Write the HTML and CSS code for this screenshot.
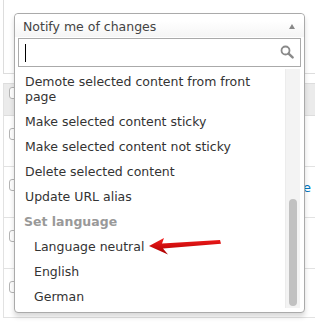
FILE: index.html
```html
<!DOCTYPE html>
<html lang="en">
<head>
  <meta charset="UTF-8" />
  <title>Bulk operations</title>
  <link rel="stylesheet" href="styles.css">
</head>
<body>
  <div class="page">
    <div class="panel"></div>

    <div class="content-table">
      <div class="row row-head"><span class="check"></span></div>
      <div class="row"><span class="check"></span></div>
      <div class="row"><span class="check"></span><a class="title" href="#">Article</a></div>
      <div class="row"><span class="check"></span></div>
      <div class="row row-last"><span class="check"></span></div>
    </div>

    <div class="chosen">
      <div class="chosen-single">
        <span>Notify me of changes</span>
        <b class="caret"></b>
      </div>
      <div class="chosen-search">
        <div class="search-input">
          <span class="text-cursor"></span>
          <svg class="search-icon" width="14" height="14" viewBox="0 0 14 14">
            <circle cx="5.5" cy="5.5" r="4" fill="none" stroke="#8a8a8a" stroke-width="1.8"/>
            <line x1="8.6" y1="8.6" x2="12.6" y2="12.4" stroke="#8a8a8a" stroke-width="2.4" stroke-linecap="round"/>
          </svg>
        </div>
      </div>
      <div class="chosen-results">
        <ul class="options">
          <li>Demote selected content from front page</li>
          <li>Make selected content sticky</li>
          <li>Make selected content not sticky</li>
          <li>Delete selected content</li>
          <li>Update URL alias</li>
          <li class="group">Set language</li>
          <li class="group-option">Language neutral</li>
          <li class="group-option">English</li>
          <li class="group-option">German</li>
        </ul>
        <div class="scrollbar"><div class="thumb"></div></div>
      </div>
    </div>

    <svg class="pointer" width="80" height="22" viewBox="0 0 80 22">
      <defs>
        <linearGradient id="red" x1="0" y1="0" x2="0" y2="1">
          <stop offset="0" stop-color="#f51c1c"/>
          <stop offset="1" stop-color="#a80000"/>
        </linearGradient>
      </defs>
      <polygon points="2,11 17,3 15,8.5 73,5 74,8.8 16,13.5 21,19.5" fill="url(#red)"/>
    </svg>
  </div>
</body>
</html>
```

FILE: styles.css
```css
body {
  margin: 0;
  background: #fff;
  font-family: "DejaVu Sans", sans-serif;
}

.page {
  position: relative;
  width: 315px;
  height: 327px;
  overflow: hidden;
}

.panel {
  margin-left: 3px;
  height: 73px;
  border-left: 1px solid #ddd;
  border-bottom: 1px solid #ddd;
}

.content-table {
  margin: 9px 0 0 3px;
  border-left: 1px solid #e2e2e2;
  border-top: 1px solid #ddd;
}

.row {
  display: flex;
  align-items: flex-start;
  justify-content: space-between;
  height: 51px;
  padding: 12px 4px 0 5px;
  box-sizing: border-box;
  border-bottom: 1px solid #e2e2e2;
}

.row-head {
  height: 32px;
  padding-top: 3px;
  background: #ebebeb;
  border-bottom-color: #ddd;
}

.row-last {
  height: 49px;
}

.check {
  width: 11px;
  height: 10px;
  border: 1px solid #b5b5b5;
  border-radius: 3px;
  background: #fff;
}

.title {
  font-size: 13px;
  line-height: 15px;
  margin-top: 1px;
  color: #0074bd;
  text-decoration: none;
}

/* dropdown */
.chosen {
  position: absolute;
  left: 14px;
  top: 13px;
  width: 291px;
  box-sizing: border-box;
  border: 1px solid #aaa;
  border-radius: 4px;
  background: #fff;
  box-shadow: 0 4px 5px rgba(0, 0, 0, 0.15);
  font-size: 12.5px;
  color: #333;
}

.chosen-single {
  display: flex;
  justify-content: space-between;
  align-items: center;
  height: 21px;
  padding: 2px 8px 0 8px;
  line-height: 21px;
  color: #444;
  border-radius: 4px 4px 0 0;
  background: linear-gradient(#fff 30%, #f5f5f5 100%);
}

.caret {
  width: 0;
  height: 0;
  margin-right: 1px;
  border-left: 3.5px solid transparent;
  border-right: 3.5px solid transparent;
  border-bottom: 5px solid #888;
}

.chosen-search {
  padding: 1px 3px 2px 3px;
}

.search-input {
  display: flex;
  align-items: center;
  justify-content: space-between;
  height: 27px;
  padding: 0 6px;
  border: 1px solid #aaa;
}

.text-cursor {
  width: 1px;
  height: 18px;
  background: #000;
}

.search-icon {
  margin-top: -1px;
}

.chosen-results {
  display: flex;
  height: 239px;
  margin: 0 4px 4px 0;
  padding-left: 4px;
}

.options {
  flex: 1;
  margin: 0;
  padding: 0;
  list-style: none;
  overflow: hidden;
}

.options li {
  padding: 5px 6px;
  line-height: 15px;
}

.options .group {
  font-weight: bold;
  color: #999;
  padding-left: 5px;
}

.options .group-option {
  padding-left: 15px;
}

.scrollbar {
  width: 14px;
  background: #f3f3f3;
  border-left: 1px solid #ececec;
  display: flex;
  flex-direction: column;
  justify-content: flex-end;
  align-items: center;
  padding-bottom: 2px;
}

.thumb {
  width: 8px;
  height: 107px;
  border-radius: 4px;
  background: #c1c1c1;
}

.pointer {
  position: absolute;
  left: 147px;
  top: 235px;
}
```
